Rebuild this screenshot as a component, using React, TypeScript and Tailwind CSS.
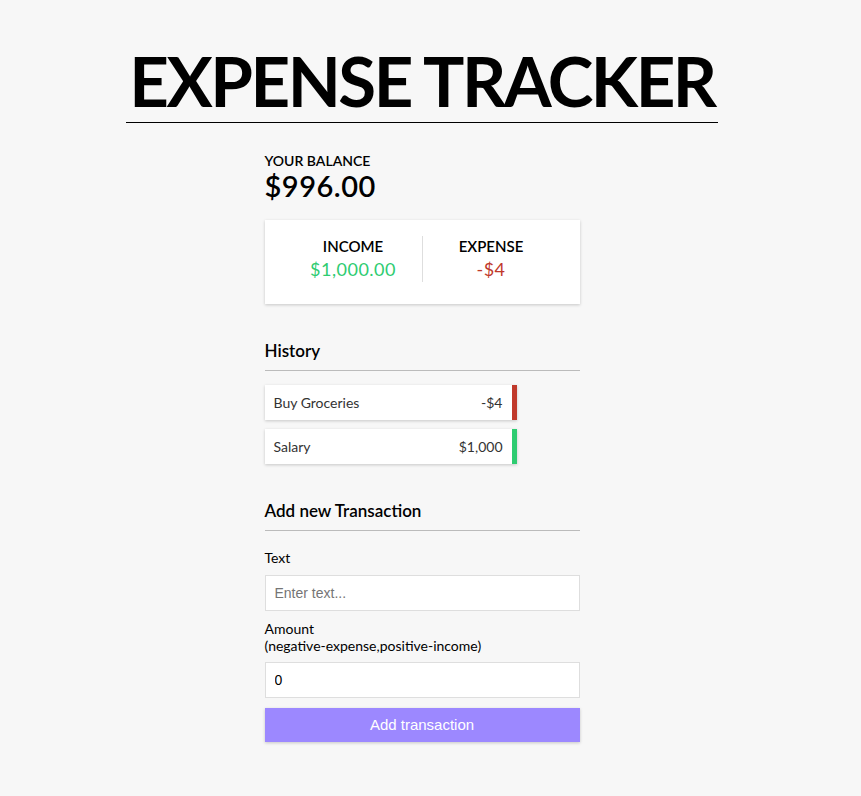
export default function App() {
  const transactions = [
    { id: 1, text: 'Buy Groceries', amount: '-$4', color: 'border-[#c0392b]' },
    { id: 2, text: 'Salary', amount: '$1,000', color: 'border-[#2ecc71]' },
  ];

  return (
    <div className="min-h-[796px] bg-[#f7f7f7] font-['Lato',sans-serif] text-black">
      <div className="w-[844px]">
        <div className="flex justify-center pt-[40px]">
          <h1 className="border-b border-black px-[3px] text-[69px] leading-[82px] font-bold tracking-[-2.5px]">
            EXPENSE TRACKER
          </h1>
        </div>

        <div className="mx-auto mt-[30px] w-[315px]">
          <h4 className="text-[14px] leading-[16px] font-semibold uppercase">Your Balance</h4>
          <p className="text-[29px] leading-[34px] font-semibold tracking-[0.5px]">$996.00</p>

          {/* income / expense card */}
          <div className="mt-[17px] flex bg-white px-[20px] pt-[16px] pb-[22px] shadow-[0_1px_3px_rgba(0,0,0,0.2)]">
            <div className="flex-1 text-center">
              <h4 className="text-[15px] leading-[20px] font-semibold uppercase">Income</h4>
              <p className="text-[18px] leading-[26px] tracking-[0.5px] text-[#2ecc71]">$1,000.00</p>
            </div>
            <div className="w-px bg-[#dedede]" />
            <div className="flex-1 text-center">
              <h4 className="text-[15px] leading-[20px] font-semibold uppercase">Expense</h4>
              <p className="text-[18px] leading-[26px] tracking-[0.5px] text-[#c0392b]">-$4</p>
            </div>
          </div>

          <h3 className="mt-[36px] border-b border-[#bbb] pb-[8px] text-[17px] leading-[22px] font-semibold">
            History
          </h3>
          <ul className="mt-[14px] flex w-[252px] flex-col gap-[9px]">
            {transactions.map((t) => (
              <li
                key={t.id}
                className={`flex h-[35px] items-center justify-between border-r-[5px] bg-white pl-[9px] pr-[9px] text-[14px] text-[#333] shadow-[0_1px_3px_rgba(0,0,0,0.2)] ${t.color}`}
              >
                <span>{t.text}</span>
                <span>{t.amount}</span>
              </li>
            ))}
          </ul>

          <h3 className="mt-[36px] border-b border-[#bbb] pb-[8px] text-[17px] leading-[22px] font-semibold">
            Add new Transaction
          </h3>
          <form className="mt-[18px]">
            <label className="block text-[14px] leading-[18px]">Text</label>
            <input
              type="text"
              placeholder="Enter text..."
              className="mt-[8px] block h-[36px] w-full border border-[#dedede] bg-white px-[9px] font-['Liberation_Sans',Arial,sans-serif] text-[14px] placeholder:text-[#757575]"
            />
            <label className="mt-[9px] block text-[14px] leading-[17px]">
              Amount <br />
              (negative-expense,positive-income)
            </label>
            <input
              type="number"
              defaultValue={0}
              className="mt-[8px] block h-[36px] w-full border border-[#dedede] bg-white px-[9px] font-['Liberation_Sans',Arial,sans-serif] text-[14px]"
            />
            <button
              type="button"
              className="mt-[10px] block h-[34px] w-full bg-[#9c88ff] font-['Liberation_Sans',Arial,sans-serif] text-[15px] text-white shadow-[0_1px_3px_rgba(0,0,0,0.2)]"
            >
              Add transaction
            </button>
          </form>
        </div>
      </div>
    </div>
  );
}
